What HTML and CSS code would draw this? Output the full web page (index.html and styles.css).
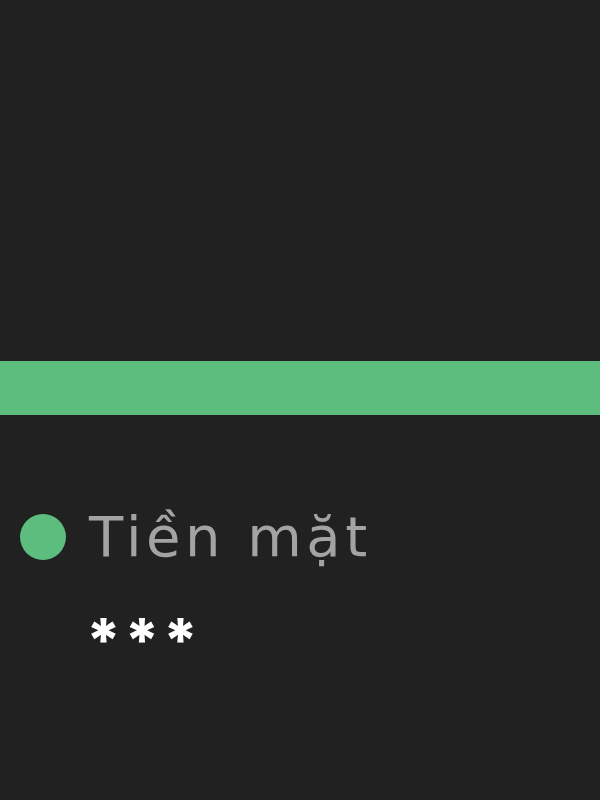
FILE: index.html
```html
<!DOCTYPE html>
<html>
<head>
<meta charset="utf-8">
<link rel="stylesheet" href="styles.css">
</head>
<body>
<div class="screen">
  <div class="top"></div>
  <div class="bar"></div>
  <div class="legend">
    <div class="row">
      <span class="dot"></span>
      <span class="label">Tiền mặt</span>
    </div>
    <div class="value">***</div>
  </div>
</div>
</body>
</html>
```
FILE: styles.css
```css
html, body {
  margin: 0;
  padding: 0;
  background: #212121;
}
.screen {
  width: 600px;
  height: 800px;
  background: #212121;
  font-family: Inter, "Noto Sans", sans-serif;
}
.top {
  height: 361px;
}
.bar {
  height: 54px;
  background: #5dbd7f;
}
.legend {
  padding: 97px 0 0 20px;
}
.row {
  display: flex;
  align-items: center;
  gap: 23px;
  height: 50px;
}
.dot {
  width: 46px;
  height: 46px;
  border-radius: 50%;
  background: #5dbd7f;
  flex: none;
}
.label {
  font-family: "DejaVu Sans", sans-serif;
  font-size: 56px;
  color: #a3a3a3;
  line-height: 50px;
  letter-spacing: 4.5px;
}
.value {
  margin: 58px 0 0 66px;
  font-size: 60px;
  font-weight: 800;
  color: #ffffff;
  line-height: 40px;
  letter-spacing: 3.5px;
}
```
